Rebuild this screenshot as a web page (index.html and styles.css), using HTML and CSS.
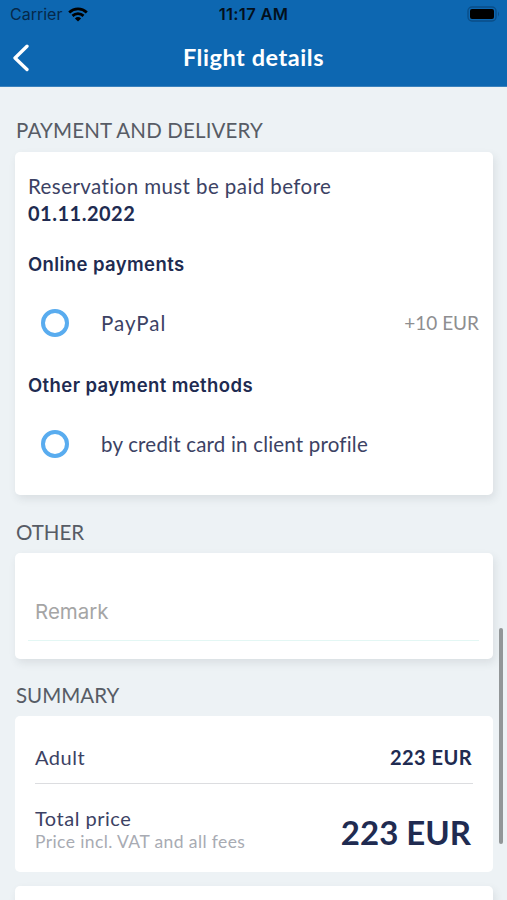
FILE: index.html
```html
<!DOCTYPE html>
<html lang="en">
<head>
<meta charset="utf-8">
<title>Flight details</title>
<link rel="stylesheet" href="styles.css">
</head>
<body>
<div class="screen">
  <header class="header">
    <div class="status">
      <div class="carrier"><span>Carrier</span>
        <svg class="wifi" width="20" height="15" viewBox="0 0 20 15" fill="none" stroke="currentColor" stroke-width="2.8"><path d="M1.2 5.4C6.2.7 13.8.7 18.8 5.4M4.5 8.9c3.2-2.9 7.8-2.9 11 0"/><path d="M10 14.6l-3.1-3.2a4.5 4.5 0 0 1 6.2 0z" fill="currentColor" stroke="none"/></svg>
      </div>
      <span class="clock">11:17 AM</span>
      <svg class="battery" width="34" height="16" viewBox="0 0 34 16"><rect x="1" y="1" width="28" height="14" rx="4" fill="none" stroke="#0a4e88" stroke-width="1.4"/><rect x="3" y="3" width="24" height="10" rx="2" fill="#000"/><path d="M31 5.5q2 2.5 0 5z" fill="#0a4e88"/></svg>
    </div>
    <nav class="nav">
      <svg class="back" width="18" height="28" viewBox="0 0 18 28" fill="none" stroke="#fff" stroke-width="3.3" stroke-linecap="round" stroke-linejoin="round"><path d="M15 2.2L3 14l12 11.5"/></svg>
      <h1 class="title">Flight details</h1>
    </nav>
  </header>
  <main class="content">
    <h2 class="section s-payment">PAYMENT AND DELIVERY</h2>
    <section class="card payment">
      <p class="notice">Reservation must be paid before</p>
      <p class="date">01.11.2022</p>
      <h3 class="group g-online">Online payments</h3>
      <div class="option"><span class="radio"></span><span class="label l-paypal">PayPal</span><span class="fee">+10 EUR</span></div>
      <h3 class="group g-other">Other payment methods</h3>
      <div class="option"><span class="radio"></span><span class="label l-credit">by credit card in client profile</span></div>
    </section>
    <h2 class="section s-other">OTHER</h2>
    <section class="card other"><div class="field">Remark</div></section>
    <h2 class="section s-summary">SUMMARY</h2>
    <section class="card summary">
      <div class="row"><span class="adult">Adult</span><span class="price">223 EUR</span></div>
      <div class="row total">
        <div><p class="total-label">Total price</p><p class="vat">Price incl. VAT and all fees</p></div>
        <span class="total-price">223 EUR</span>
      </div>
    </section>
    <section class="card next"></section>
  </main>
  <div class="scrollbar"></div>
</div>
</body>
</html>
```
FILE: styles.css
```css
* { box-sizing: border-box; }
body, h1, h2, h3, p { margin: 0; }
body {
  background: #edf2f5;
  color: #3c4264;
  font-family: Lato, "Liberation Sans", sans-serif;
  font-size: 20px;
  font-variant-ligatures: none;
  overflow: hidden;
}
.screen { position: relative; height: 900px; overflow: hidden; }
.header { height: 87px; background: #0d67b1; border-bottom: 1px solid #3b82bd; }
.status {
  display: grid;
  grid-template-columns: 1fr auto 1fr;
  align-items: center;
  height: 29px;
  padding: 0 6px 0 10px;
  color: #06294a;
  font: 500 16px/29px Inter, sans-serif;
}
.carrier { display: flex; align-items: center; gap: 6px; font-weight: 400; }
.wifi { color: #000; }
.clock { margin-left: -4px; color: #03101c; font-size: 16.5px; font-weight: 600; letter-spacing: .3px; }
.battery { justify-self: end; margin-top: -2px; }
.nav { display: grid; grid-template-columns: 40px 1fr 40px; align-items: center; height: 57px; }
.back { margin-left: 12px; }
.title { margin-top: -2px; color: #fff; font-size: 23.5px; font-weight: 700; letter-spacing: .55px; text-align: center; }
.content { padding: 0 14px 0 15px; }
.section { padding-left: 1px; color: #575c65; font-size: 20.5px; font-weight: 400; line-height: 26px; }
.s-payment { margin-top: 30px; letter-spacing: .15px; }
.s-other { margin-top: 24px; }
.s-summary { margin-top: 23px; }
.card { background: #fff; border-radius: 5px; box-shadow: 2px 4px 8px rgba(50, 60, 70, .1); }
.payment { height: 343px; margin-top: 9px; padding: 21px 14px 0 13px; }
.notice, .date { line-height: 27px; white-space: nowrap; }
.notice { font-size: 20.5px; letter-spacing: .42px; }
.date { color: #202b51; font-weight: 700; letter-spacing: .5px; }
.group { color: #202b51; font: 600 18.5px/26px Inter, sans-serif; letter-spacing: .4px; }
.g-online { margin-top: 24px; }
.g-other { margin-top: 18px; }
.option { display: flex; align-items: center; height: 63px; margin-top: 14px; padding-left: 13px; }
.radio { width: 28px; height: 28px; margin-right: 32px; border: 4px solid #59acef; border-radius: 50%; }
.l-paypal { font-size: 20.5px; letter-spacing: 1px; }
.l-credit { font-size: 20.5px; letter-spacing: .2px; }
.fee { margin-left: auto; color: #8e8e90; font-size: 19px; }
.other { height: 106px; margin-top: 8px; padding: 36px 14px 0 13px; }
.field { height: 52px; padding-left: 7px; border-bottom: 1px solid #e3f7f4; color: #a5a5a5; font: 400 20.5px/46px Inter, sans-serif; }
.summary { height: 156px; margin-top: 8px; padding: 15px 20px 0; box-shadow: none; }
.row { display: flex; justify-content: space-between; align-items: center; height: 53px; border-bottom: 1px solid #dcdde0; }
.adult, .total-label { letter-spacing: .5px; }
.price { margin-right: 1px; color: #202b51; font-weight: 700; letter-spacing: .45px; }
.total { height: 88px; padding-top: 3px; border: 0; }
.total-label { line-height: 25px; }
.vat { color: #a8abb3; font-size: 17.5px; line-height: 22px; letter-spacing: .4px; }
.total-price { margin: 4px 2px 0 0; color: #202b51; font-size: 33px; font-weight: 700; }
.next { height: 60px; margin-top: 14px; }
.scrollbar { position: absolute; top: 628px; right: 4px; width: 4px; height: 216px; border-radius: 2px; background: #929698; }
```
